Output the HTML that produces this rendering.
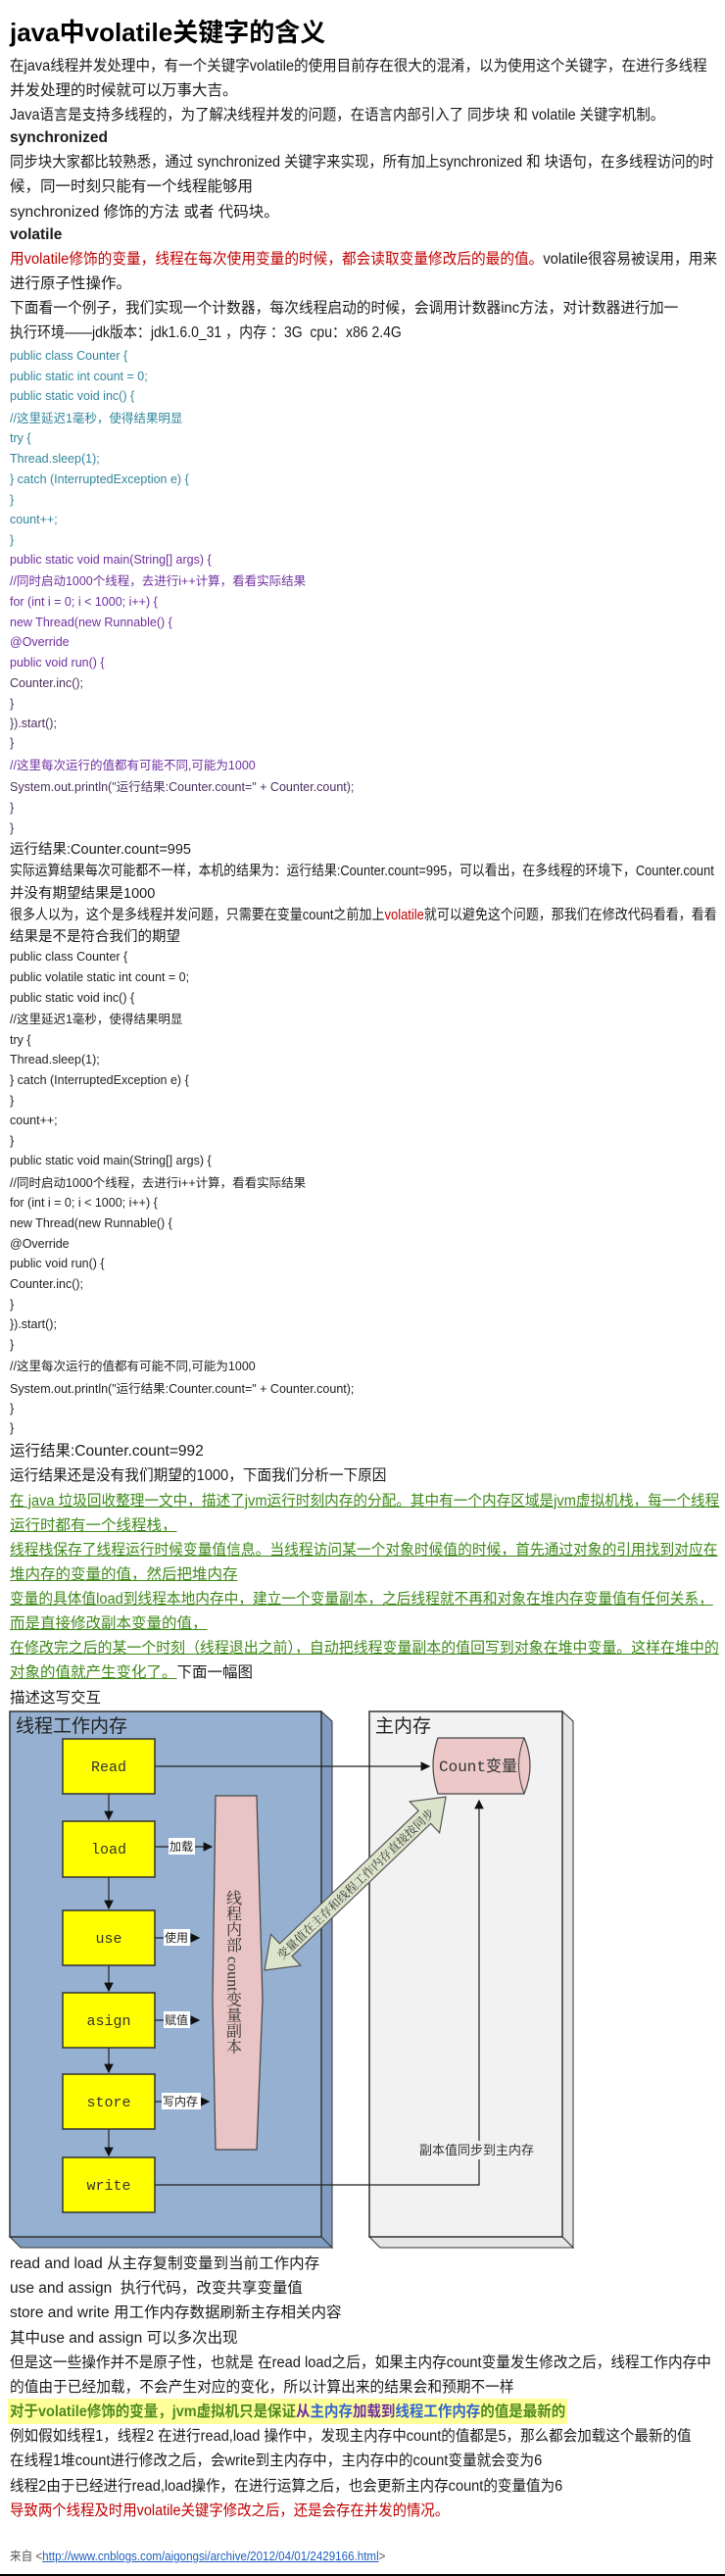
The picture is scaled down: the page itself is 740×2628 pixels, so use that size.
<!DOCTYPE html>
<html><head><meta charset="utf-8">
<style>
html,body{margin:0;padding:0;background:#fff;}
body{width:740px;height:2628px;position:relative;overflow:hidden;font-family:"Liberation Sans","Noto Sans CJK SC",sans-serif;color:#1a1a1a;}
.l{position:absolute;left:10px;white-space:nowrap;line-height:20px;height:20px;font-size:15.5px;transform-origin:0 50%;}
.c{font-size:12.5px;}
.t{color:#31859c;}
.p{color:#7030a0;}
.d{color:#4a3060;}
.k{color:#222;}
.g{color:#3f8a1a;text-decoration:underline;text-decoration-color:#3f8a1a;}
.r{color:#c00000;}
.b{font-weight:bold;}
</style></head><body>
<div class="l b" style="top:16px;font-size:26px;line-height:34px;height:34px;color:#000">java中volatile关键字的含义</div>
<div class="l f" style="top:58px;--w:712">在java线程并发处理中，有一个关键字volatile的使用目前存在很大的混淆，以为使用这个关键字，在进行多线程</div>
<div class="l" style="top:83px">并发处理的时候就可以万事大吉。</div>
<div class="l f" style="top:108px;--w:668">Java语言是支持多线程的，为了解决线程并发的问题，在语言内部引入了 同步块 和 volatile 关键字机制。</div>
<div class="l b" style="top:131px">synchronized</div>
<div class="l f" style="top:156px;--w:718">同步块大家都比较熟悉，通过 synchronized 关键字来实现，所有加上synchronized 和 块语句，在多线程访问的时</div>
<div class="l" style="top:181px">候，同一时刻只能有一个线程能够用</div>
<div class="l" style="top:207px">synchronized 修饰的方法 或者 代码块。</div>
<div class="l b" style="top:230px">volatile</div>
<div class="l f" style="top:255px;--w:722"><span class="r">用volatile修饰的变量，线程在每次使用变量的时候，都会读取变量修改后的最的值。</span>volatile很容易被误用，用来</div>
<div class="l" style="top:280px">进行原子性操作。</div>
<div class="l f" style="top:305px;--w:682">下面看一个例子，我们实现一个计数器，每次线程启动的时候，会调用计数器inc方法，对计数器进行加一</div>
<div class="l f" style="top:330px;--w:400">执行环境——jdk版本：jdk1.6.0_31 ，内存 ：3G &nbsp;cpu：x86 2.4G</div>

<div class="l c t" style="top:353px">public class Counter {</div>
<div class="l c t" style="top:374px">public static int count = 0;</div>
<div class="l c t" style="top:394px">public static void inc() {</div>
<div class="l c t" style="top:417px">//这里延迟1毫秒，使得结果明显</div>
<div class="l c t" style="top:437px">try {</div>
<div class="l c t" style="top:458px">Thread.sleep(1);</div>
<div class="l c t" style="top:479px">} catch (InterruptedException e) {</div>
<div class="l c t" style="top:500px">}</div>
<div class="l c t" style="top:520px">count++;</div>
<div class="l c t" style="top:541px">}</div>
<div class="l c p" style="top:561px">public static void main(String[] args) {</div>
<div class="l c p" style="top:583px">//同时启动1000个线程，去进行i++计算，看看实际结果</div>
<div class="l c p" style="top:604px">for (int i = 0; i &lt; 1000; i++) {</div>
<div class="l c p" style="top:625px">new Thread(new Runnable() {</div>
<div class="l c p" style="top:645px">@Override</div>
<div class="l c p" style="top:666px">public void run() {</div>
<div class="l c d" style="top:687px">Counter.inc();</div>
<div class="l c d" style="top:708px">}</div>
<div class="l c d" style="top:728px">}).start();</div>
<div class="l c d" style="top:748px">}</div>
<div class="l c p" style="top:771px">//这里每次运行的值都有可能不同,可能为1000</div>
<div class="l c d" style="top:793px">System.out.println("运行结果:Counter.count=" + Counter.count);</div>
<div class="l c d" style="top:814px">}</div>
<div class="l c d" style="top:835px">}</div>

<div class="l" style="top:857px;font-size:14.5px">运行结果:Counter.count=995</div>
<div class="l f" style="top:879px;font-size:14.5px;--w:719">实际运算结果每次可能都不一样，本机的结果为：运行结果:Counter.count=995，可以看出，在多线程的环境下，Counter.count</div>
<div class="l" style="top:902px;font-size:14.5px">并没有期望结果是1000</div>
<div class="l f" style="top:924px;font-size:14.5px;--w:722">很多人以为，这个是多线程并发问题，只需要在变量count之前加上<span class="r">volatile</span>就可以避免这个问题，那我们在修改代码看看，看看</div>
<div class="l" style="top:946px;font-size:14.5px">结果是不是符合我们的期望</div>

<div class="l c k" style="top:966px">public class Counter {</div>
<div class="l c k" style="top:987px">public volatile static int count = 0;</div>
<div class="l c k" style="top:1008px">public static void inc() {</div>
<div class="l c k" style="top:1030px">//这里延迟1毫秒，使得结果明显</div>
<div class="l c k" style="top:1051px">try {</div>
<div class="l c k" style="top:1071px">Thread.sleep(1);</div>
<div class="l c k" style="top:1092px">} catch (InterruptedException e) {</div>
<div class="l c k" style="top:1113px">}</div>
<div class="l c k" style="top:1133px">count++;</div>
<div class="l c k" style="top:1154px">}</div>
<div class="l c k" style="top:1174px">public static void main(String[] args) {</div>
<div class="l c k" style="top:1197px">//同时启动1000个线程，去进行i++计算，看看实际结果</div>
<div class="l c k" style="top:1217px">for (int i = 0; i &lt; 1000; i++) {</div>
<div class="l c k" style="top:1238px">new Thread(new Runnable() {</div>
<div class="l c k" style="top:1259px">@Override</div>
<div class="l c k" style="top:1279px">public void run() {</div>
<div class="l c k" style="top:1300px">Counter.inc();</div>
<div class="l c k" style="top:1321px">}</div>
<div class="l c k" style="top:1341px">}).start();</div>
<div class="l c k" style="top:1362px">}</div>
<div class="l c k" style="top:1384px">//这里每次运行的值都有可能不同,可能为1000</div>
<div class="l c k" style="top:1407px">System.out.println("运行结果:Counter.count=" + Counter.count);</div>
<div class="l c k" style="top:1427px">}</div>
<div class="l c k" style="top:1447px">}</div>

<div class="l" style="top:1471px">运行结果:Counter.count=992</div>
<div class="l f" style="top:1496px;--w:384">运行结果还是没有我们期望的1000，下面我们分析一下原因</div>
<div class="l g f" style="top:1522px;--w:724">在 java 垃圾回收整理一文中，描述了jvm运行时刻内存的分配。其中有一个内存区域是jvm虚拟机栈，每一个线程</div>
<div class="l g" style="top:1547px">运行时都有一个线程栈，</div>
<div class="l g f" style="top:1572px;--w:723">线程栈保存了线程运行时候变量值信息。当线程访问某一个对象时候值的时候，首先通过对象的引用找到对应在</div>
<div class="l g" style="top:1597px">堆内存的变量的值，然后把堆内存</div>
<div class="l g f" style="top:1622px;--w:718">变量的具体值load到线程本地内存中，建立一个变量副本，之后线程就不再和对象在堆内存变量值有任何关系，</div>
<div class="l g" style="top:1647px">而是直接修改副本变量的值，</div>
<div class="l g f" style="top:1672px;--w:724">在修改完之后的某一个时刻（线程退出之前），自动把线程变量副本的值回写到对象在堆中变量。这样在堆中的</div>
<div class="l" style="top:1697px"><span class="g">对象的值就产生变化了。</span>下面一幅图</div>
<div class="l" style="top:1723px">描述这写交互</div>

<svg style="position:absolute;left:0;top:1740px" width="600" height="560" viewBox="0 0 600 560" xmlns="http://www.w3.org/2000/svg" font-family="Liberation Sans, Noto Sans CJK SC, sans-serif">
<defs><marker id="ah" markerWidth="8" markerHeight="8" refX="7" refY="4" orient="auto"><path d="M0,0 L8,4 L0,8 z" fill="#111"/></marker></defs>
<polygon points="328,6 339,16 339,553 328,542" fill="#7f9cc0" stroke="#333"/>
<polygon points="10,542 328,542 339,553 21,553" fill="#7f9cc0" stroke="#333"/>
<rect x="10" y="6" width="318" height="536" fill="#95b0d1" stroke="#333" stroke-width="1.5"/>
<polygon points="574,6 585,16 585,553 574,542" fill="#e6e6e6" stroke="#333"/>
<polygon points="377,542 574,542 585,553 388,553" fill="#e6e6e6" stroke="#333"/>
<rect x="377" y="6" width="197" height="536" fill="#f2f2f2" stroke="#333" stroke-width="1.5"/>
<text x="16" y="27" font-size="19" fill="#222">线程工作内存</text>
<text x="383" y="27" font-size="19" fill="#222">主内存</text>
<g stroke="#222" stroke-width="1.2">
<line x1="111" y1="90" x2="111" y2="116" marker-end="url(#ah)"/>
<line x1="111" y1="175" x2="111" y2="207" marker-end="url(#ah)"/>
<line x1="111" y1="265" x2="111" y2="291" marker-end="url(#ah)"/>
<line x1="111" y1="349" x2="111" y2="374" marker-end="url(#ah)"/>
<line x1="111" y1="432" x2="111" y2="459" marker-end="url(#ah)"/>
<line x1="158" y1="62" x2="438" y2="62" marker-end="url(#ah)"/>
<polyline points="158,489 489,489 489,97" fill="none" marker-end="url(#ah)"/>
<line x1="158" y1="144" x2="216" y2="144" marker-end="url(#ah)"/>
<line x1="158" y1="237" x2="203" y2="237" marker-end="url(#ah)"/>
<line x1="158" y1="321" x2="203" y2="321" marker-end="url(#ah)"/>
<line x1="158" y1="404" x2="213" y2="404" marker-end="url(#ah)"/>
</g>
<g fill="#ffff00" stroke="#333" stroke-width="1.5">
<rect x="64" y="34" width="94" height="56"/>
<rect x="64" y="118" width="94" height="57"/>
<rect x="64" y="209" width="94" height="56"/>
<rect x="64" y="293" width="94" height="56"/>
<rect x="64" y="376" width="94" height="56"/>
<rect x="64" y="461" width="94" height="56"/>
</g>
<g font-family="Liberation Mono, monospace" font-size="15" fill="#333" text-anchor="middle">
<text x="111" y="67">Read</text><text x="111" y="151">load</text><text x="111" y="242">use</text>
<text x="111" y="326">asign</text><text x="111" y="409">store</text><text x="111" y="494">write</text>
</g>
<g font-size="12" fill="#222">
<rect x="172" y="135" width="27" height="17" fill="#fff"/><text x="173" y="148">加载</text>
<rect x="167" y="228" width="27" height="17" fill="#fff"/><text x="168" y="241">使用</text>
<rect x="167" y="312" width="27" height="17" fill="#fff"/><text x="168" y="325">赋值</text>
<rect x="165" y="395" width="40" height="17" fill="#fff"/><text x="166" y="408">写内存</text>
</g>
<polygon points="220,92 262,92 268,300 262,453 220,453 217,300" fill="#e8c4c4" stroke="#444" stroke-width="1.2"/>
<text x="237" y="188" font-size="16" fill="#333" style="writing-mode:vertical-rl;glyph-orientation-vertical:0" font-family="Liberation Serif, Noto Serif CJK SC, serif">线程内部 count变量副本</text>
<path d="M447,33 L535,33 Q547,61 535,90 L447,90 Q437,61 447,33 Z" fill="#ecc8c8" stroke="#444" stroke-width="1.2"/>
<path d="M535,33 Q524,61 535,90" fill="none" stroke="#444"/>
<text x="488" y="67" font-size="16" fill="#333" text-anchor="middle" font-family="Liberation Mono, Noto Sans CJK SC, monospace">Count变量</text>
<g transform="translate(270,270) rotate(-43.7)">
<polygon points="0,0 30,-22 30,-9 226,-9 226,-22 256,0 226,22 226,9 30,9 30,22" fill="#dde4cc" stroke="#555" stroke-width="1.2"/>
<text x="128" y="5" font-size="12" fill="#333" text-anchor="middle" font-family="Liberation Serif, Noto Serif CJK SC, serif">变量值在主存和线程工作内存直接按同步</text>
</g>
<rect x="426" y="444" width="124" height="19" fill="#f2f2f2"/>
<text x="428" y="458" font-size="13" fill="#333">副本值同步到主内存</text>
</svg>

<div class="l" style="top:2300px">read and load 从主存复制变量到当前工作内存</div>
<div class="l" style="top:2325px">use and assign &nbsp;执行代码，改变共享变量值</div>
<div class="l" style="top:2350px">store and write 用工作内存数据刷新主存相关内容</div>
<div class="l" style="top:2376px">其中use and assign 可以多次出现</div>
<div class="l f" style="top:2401px;--w:716">但是这一些操作并不是原子性，也就是 在read load之后，如果主内存count变量发生修改之后，线程工作内存中</div>
<div class="l f" style="top:2426px;--w:515">的值由于已经加载，不会产生对应的变化，所以计算出来的结果会和预期不一样</div>
<div style="position:absolute;left:8px;top:2447px;width:571px;height:26px;background:#ffff99"></div>
<div class="l b f" style="top:2451px;color:#4e8a1e;--w:567">对于volatile修饰的变量，jvm虚拟机只是保证<span style="color:#7030a0">从</span><span style="color:#3366cc">主内存</span><span style="color:#7030a0">加载到</span><span style="color:#3366cc">线程工作内存</span>的值是最新的</div>
<div class="l f" style="top:2476px;--w:696">例如假如线程1，线程2 在进行read,load 操作中，发现主内存中count的值都是5，那么都会加载这个最新的值</div>
<div class="l f" style="top:2501px;--w:543">在线程1堆count进行修改之后，会write到主内存中，主内存中的count变量就会变为6</div>
<div class="l f" style="top:2527px;--w:564">线程2由于已经进行read,load操作，在进行运算之后，也会更新主内存count的变量值为6</div>
<div class="l r f" style="top:2552px;--w:448">导致两个线程及时用volatile关键字修改之后，还是会存在并发的情况。</div>
<div class="l f" style="top:2598px;font-size:12.5px;color:#555;--w:383">来自 &lt;<span style="color:#1f5fbf;text-decoration:underline">http://www.cnblogs.com/aigongsi/archive/2012/04/01/2429166.html</span>&gt;</div>
<div style="position:absolute;left:0;top:2626px;width:740px;height:2px;background:#000"></div>
<script>
(function(){
  var els=document.querySelectorAll('.l');
  for(var i=0;i<els.length;i++){
    var e=els[i];
    var w=e.scrollWidth;
    var t=parseFloat(getComputedStyle(e).getPropertyValue('--w'));
    if(e.classList.contains('f') && t>0){
      e.style.transform='scaleX('+(t/w)+')';
    } else if(w>720){
      e.style.transform='scaleX('+(720/w)+')';
    }
  }
})();
</script>
</body></html>
